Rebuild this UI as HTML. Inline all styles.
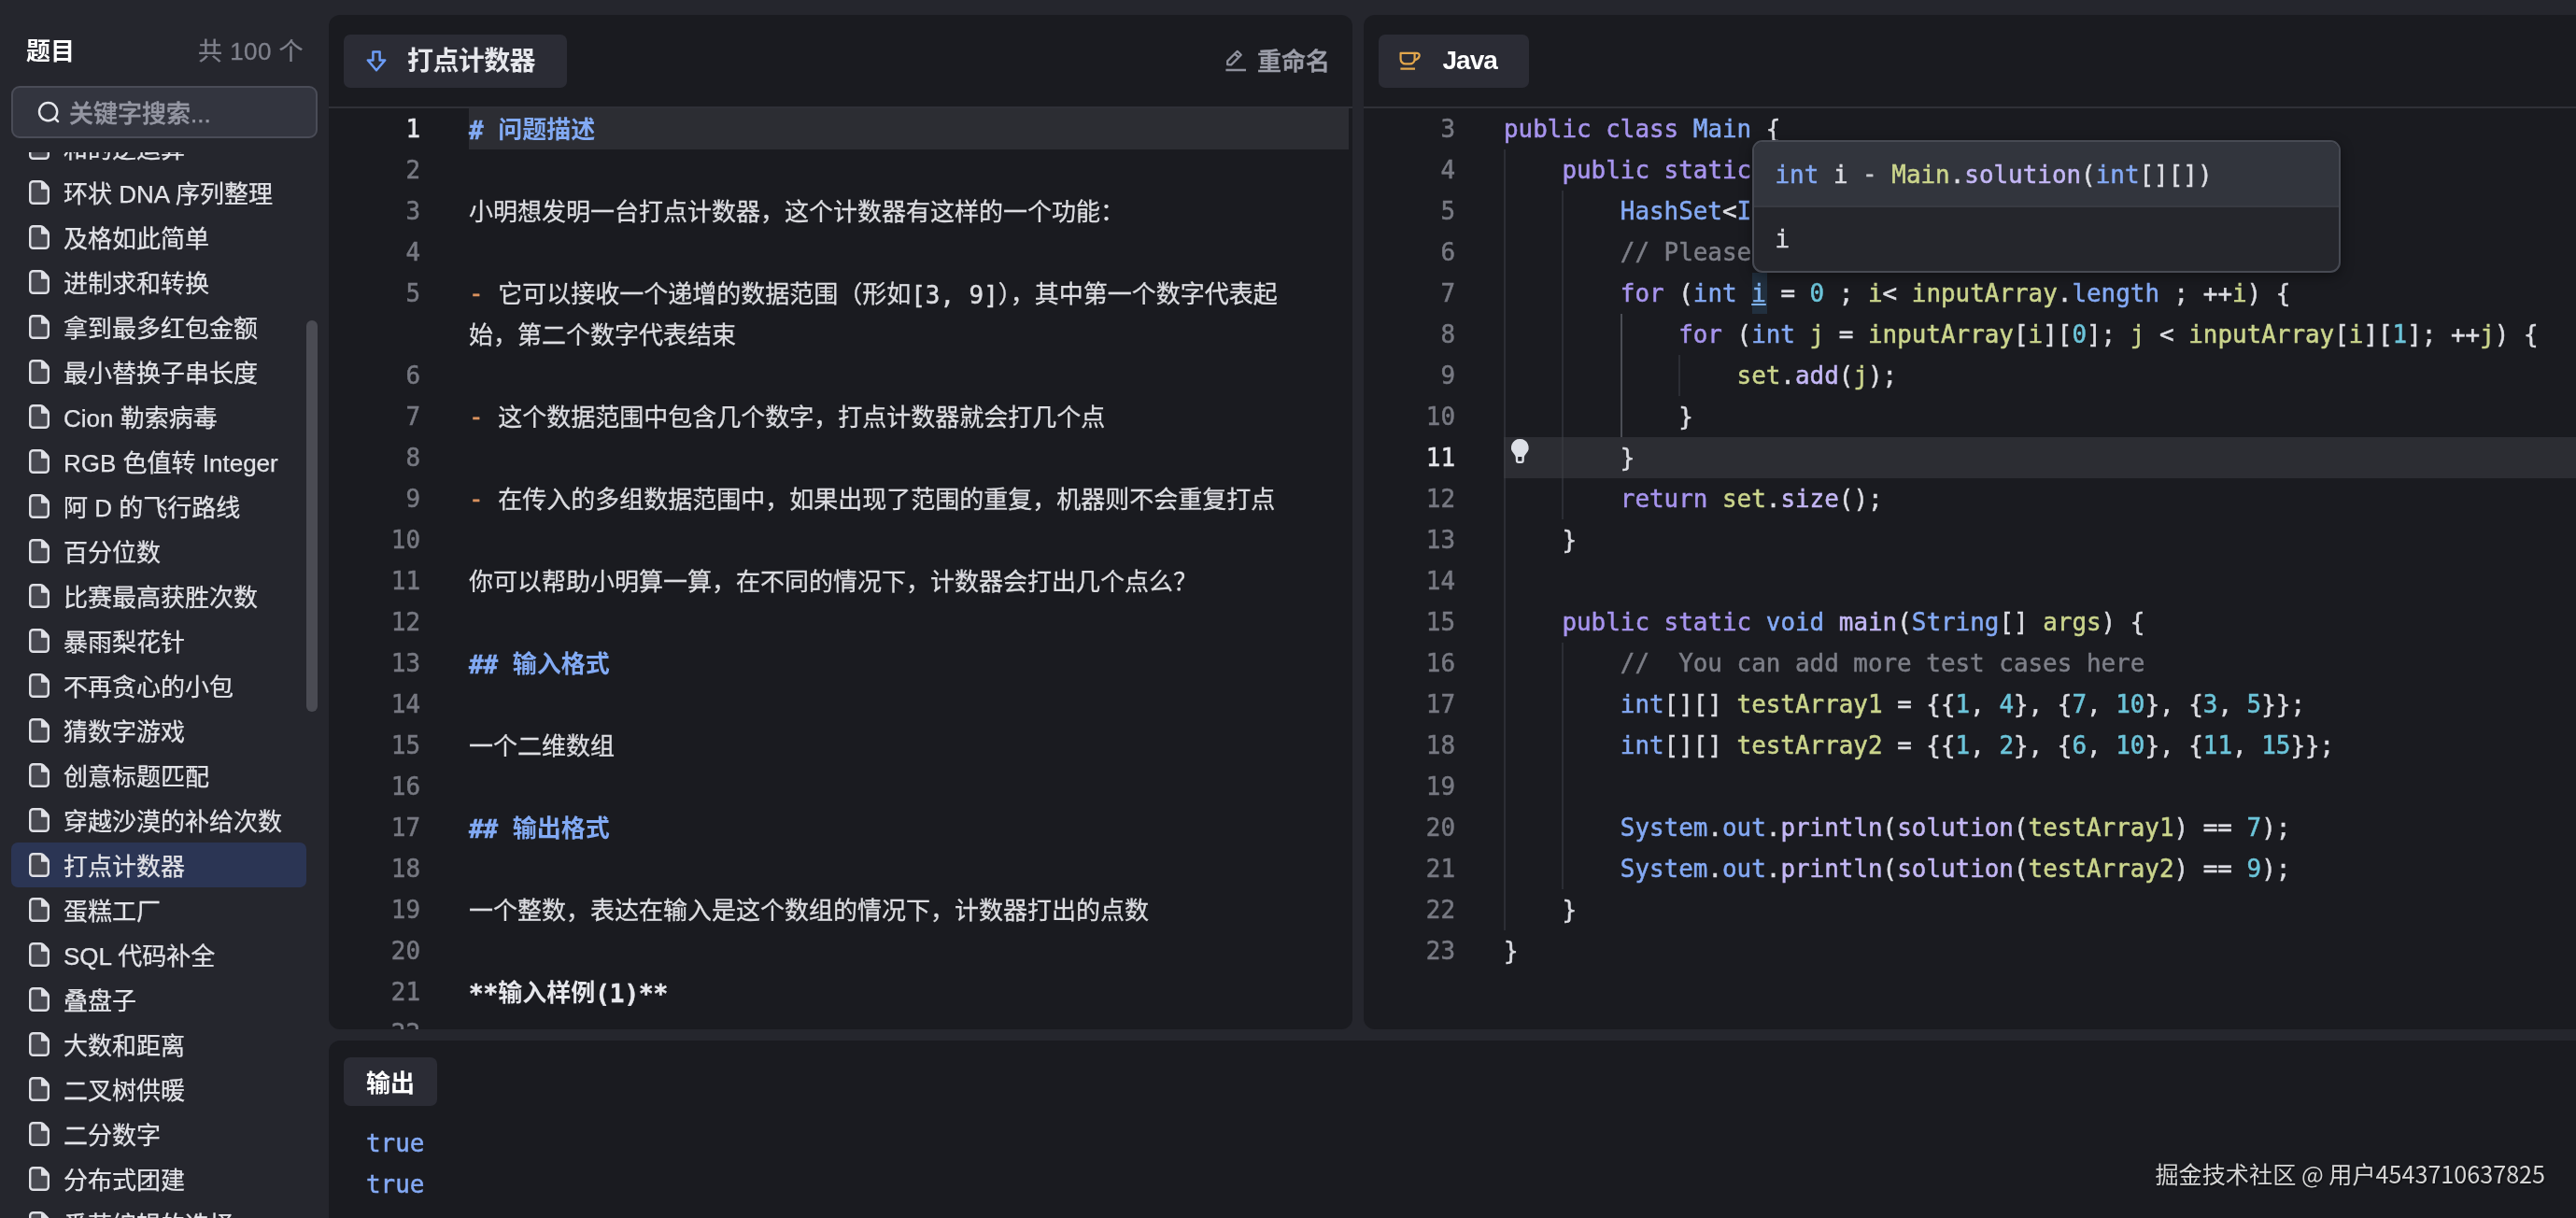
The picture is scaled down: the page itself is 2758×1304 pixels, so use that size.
<!DOCTYPE html><html lang="zh-CN"><head><meta charset="utf-8"><title>打点计数器</title><style>
*{margin:0;padding:0;box-sizing:border-box}
html,body{width:2758px;height:1304px;overflow:hidden;background:#25262d}
body{will-change:transform;position:relative;font-family:"Liberation Sans","Noto Sans CJK SC",sans-serif;color:#e2e3e8;font-size:26px}
.abs{position:absolute}
.panel{position:absolute;background:#1a1b20;overflow:hidden}
.tab{position:absolute;background:#2b2c35;border-radius:7px}
.sep{position:absolute;left:0;right:0;height:2px;background:#2f3037}
.mono{font-family:"DejaVu Sans Mono","Liberation Mono","Noto Sans CJK SC",monospace;font-size:25.913px;line-height:44px;white-space:pre;-webkit-text-stroke:0.5px}
.ln{position:absolute;width:90px;text-align:right;color:#777982;height:44px}
.ln.act{color:#e6e7ec}
.cl{position:absolute;height:44px;color:#dcdde3}
.k{color:#a794ee}.t{color:#84aaf5}.v{color:#cbd58c}.n{color:#6cc5da}.f{color:#c4b7f5}.p{color:#dcdde3}.c{color:#7d7f88}
.cj{font-family:"Noto Sans CJK SC",sans-serif;font-size:26px;position:relative;top:-1.5px;-webkit-text-stroke:0}
.md{color:#dcdde1}
.md.cj{-webkit-text-stroke:0.3px}
.hw{display:inline-block;width:13px;text-spacing-trim:space-all}
.h{color:#82aaf4;font-weight:bold}
.o{color:#d9925e;position:relative;top:-2.5px}
.dash{color:#c8c9ce;position:relative;top:-1px}
.b{color:#e6e7ec;font-weight:bold}
.guide{position:absolute;width:2px;background:#2c2e35}
.item{position:absolute;left:12px;width:316px;height:48px;border-radius:7px}
.item svg{position:absolute;left:19px;top:11px}
.item span{position:absolute;left:56px;top:2px;line-height:48px;white-space:nowrap;color:#e2e3e8;font-size:26px;-webkit-text-stroke:0.25px}
.item.sel{background:#2b3554}
</style></head><body>
<div class="abs" style="left:28px;top:35px;line-height:40px;font-weight:bold;color:#fff;font-size:26px">题目</div>
<div class="abs" style="right:2433px;top:35px;line-height:40px;color:#7f818c;font-size:26px;white-space:pre;letter-spacing:0.45px;-webkit-text-stroke:0.3px">共 100 个</div>
<div class="abs" style="left:12px;top:92px;width:328px;height:56px;border:2px solid #4a4c57;border-radius:9px;background:#33353f"></div>
<svg class="abs" style="left:39px;top:107px" width="28" height="28" viewBox="0 0 28 28"><circle cx="12.6" cy="12.6" r="9.6" fill="none" stroke="#e6e7ec" stroke-width="2.4"/><path d="M19.6 19.6 L23 23" stroke="#e6e7ec" stroke-width="2.5" stroke-linecap="round"/></svg>
<div class="abs" style="left:74px;top:101.5px;line-height:40px;color:#9496a2;font-size:26px;font-weight:500;-webkit-text-stroke:0.4px">关键字搜索...</div>
<div class="abs" style="left:0;top:163px;width:345px;height:1141px;overflow:hidden">
<div class="item" style="top:-29px"><svg width="24" height="26" viewBox="0 0 24 26"><path d="M1.2 4.6A3.4 3.4 0 0 1 4.6 1.2H12.4Q14.2 1.2 15.4 2.4L19.6 6.6Q20.8 7.8 20.8 9.6V21.4A3.4 3.4 0 0 1 17.4 24.8H4.6A3.4 3.4 0 0 1 1.2 21.4Z" fill="#484951" stroke="#dfe0e6" stroke-width="2.4"/><path d="M13 1.2V9.8H20.8Q20.8 7.8 19.6 6.6L15.4 2.4Q14.2 1.2 13 1.2Z" fill="#dfe0e6"/></svg><span>和的逆运算</span></div>
<div class="item" style="top:19px"><svg width="24" height="26" viewBox="0 0 24 26"><path d="M1.2 4.6A3.4 3.4 0 0 1 4.6 1.2H12.4Q14.2 1.2 15.4 2.4L19.6 6.6Q20.8 7.8 20.8 9.6V21.4A3.4 3.4 0 0 1 17.4 24.8H4.6A3.4 3.4 0 0 1 1.2 21.4Z" fill="#484951" stroke="#dfe0e6" stroke-width="2.4"/><path d="M13 1.2V9.8H20.8Q20.8 7.8 19.6 6.6L15.4 2.4Q14.2 1.2 13 1.2Z" fill="#dfe0e6"/></svg><span>环状 DNA 序列整理</span></div>
<div class="item" style="top:67px"><svg width="24" height="26" viewBox="0 0 24 26"><path d="M1.2 4.6A3.4 3.4 0 0 1 4.6 1.2H12.4Q14.2 1.2 15.4 2.4L19.6 6.6Q20.8 7.8 20.8 9.6V21.4A3.4 3.4 0 0 1 17.4 24.8H4.6A3.4 3.4 0 0 1 1.2 21.4Z" fill="#484951" stroke="#dfe0e6" stroke-width="2.4"/><path d="M13 1.2V9.8H20.8Q20.8 7.8 19.6 6.6L15.4 2.4Q14.2 1.2 13 1.2Z" fill="#dfe0e6"/></svg><span>及格如此简单</span></div>
<div class="item" style="top:115px"><svg width="24" height="26" viewBox="0 0 24 26"><path d="M1.2 4.6A3.4 3.4 0 0 1 4.6 1.2H12.4Q14.2 1.2 15.4 2.4L19.6 6.6Q20.8 7.8 20.8 9.6V21.4A3.4 3.4 0 0 1 17.4 24.8H4.6A3.4 3.4 0 0 1 1.2 21.4Z" fill="#484951" stroke="#dfe0e6" stroke-width="2.4"/><path d="M13 1.2V9.8H20.8Q20.8 7.8 19.6 6.6L15.4 2.4Q14.2 1.2 13 1.2Z" fill="#dfe0e6"/></svg><span>进制求和转换</span></div>
<div class="item" style="top:163px"><svg width="24" height="26" viewBox="0 0 24 26"><path d="M1.2 4.6A3.4 3.4 0 0 1 4.6 1.2H12.4Q14.2 1.2 15.4 2.4L19.6 6.6Q20.8 7.8 20.8 9.6V21.4A3.4 3.4 0 0 1 17.4 24.8H4.6A3.4 3.4 0 0 1 1.2 21.4Z" fill="#484951" stroke="#dfe0e6" stroke-width="2.4"/><path d="M13 1.2V9.8H20.8Q20.8 7.8 19.6 6.6L15.4 2.4Q14.2 1.2 13 1.2Z" fill="#dfe0e6"/></svg><span>拿到最多红包金额</span></div>
<div class="item" style="top:211px"><svg width="24" height="26" viewBox="0 0 24 26"><path d="M1.2 4.6A3.4 3.4 0 0 1 4.6 1.2H12.4Q14.2 1.2 15.4 2.4L19.6 6.6Q20.8 7.8 20.8 9.6V21.4A3.4 3.4 0 0 1 17.4 24.8H4.6A3.4 3.4 0 0 1 1.2 21.4Z" fill="#484951" stroke="#dfe0e6" stroke-width="2.4"/><path d="M13 1.2V9.8H20.8Q20.8 7.8 19.6 6.6L15.4 2.4Q14.2 1.2 13 1.2Z" fill="#dfe0e6"/></svg><span>最小替换子串长度</span></div>
<div class="item" style="top:259px"><svg width="24" height="26" viewBox="0 0 24 26"><path d="M1.2 4.6A3.4 3.4 0 0 1 4.6 1.2H12.4Q14.2 1.2 15.4 2.4L19.6 6.6Q20.8 7.8 20.8 9.6V21.4A3.4 3.4 0 0 1 17.4 24.8H4.6A3.4 3.4 0 0 1 1.2 21.4Z" fill="#484951" stroke="#dfe0e6" stroke-width="2.4"/><path d="M13 1.2V9.8H20.8Q20.8 7.8 19.6 6.6L15.4 2.4Q14.2 1.2 13 1.2Z" fill="#dfe0e6"/></svg><span>Cion 勒索病毒</span></div>
<div class="item" style="top:307px"><svg width="24" height="26" viewBox="0 0 24 26"><path d="M1.2 4.6A3.4 3.4 0 0 1 4.6 1.2H12.4Q14.2 1.2 15.4 2.4L19.6 6.6Q20.8 7.8 20.8 9.6V21.4A3.4 3.4 0 0 1 17.4 24.8H4.6A3.4 3.4 0 0 1 1.2 21.4Z" fill="#484951" stroke="#dfe0e6" stroke-width="2.4"/><path d="M13 1.2V9.8H20.8Q20.8 7.8 19.6 6.6L15.4 2.4Q14.2 1.2 13 1.2Z" fill="#dfe0e6"/></svg><span>RGB 色值转 Integer</span></div>
<div class="item" style="top:355px"><svg width="24" height="26" viewBox="0 0 24 26"><path d="M1.2 4.6A3.4 3.4 0 0 1 4.6 1.2H12.4Q14.2 1.2 15.4 2.4L19.6 6.6Q20.8 7.8 20.8 9.6V21.4A3.4 3.4 0 0 1 17.4 24.8H4.6A3.4 3.4 0 0 1 1.2 21.4Z" fill="#484951" stroke="#dfe0e6" stroke-width="2.4"/><path d="M13 1.2V9.8H20.8Q20.8 7.8 19.6 6.6L15.4 2.4Q14.2 1.2 13 1.2Z" fill="#dfe0e6"/></svg><span>阿 D 的飞行路线</span></div>
<div class="item" style="top:403px"><svg width="24" height="26" viewBox="0 0 24 26"><path d="M1.2 4.6A3.4 3.4 0 0 1 4.6 1.2H12.4Q14.2 1.2 15.4 2.4L19.6 6.6Q20.8 7.8 20.8 9.6V21.4A3.4 3.4 0 0 1 17.4 24.8H4.6A3.4 3.4 0 0 1 1.2 21.4Z" fill="#484951" stroke="#dfe0e6" stroke-width="2.4"/><path d="M13 1.2V9.8H20.8Q20.8 7.8 19.6 6.6L15.4 2.4Q14.2 1.2 13 1.2Z" fill="#dfe0e6"/></svg><span>百分位数</span></div>
<div class="item" style="top:451px"><svg width="24" height="26" viewBox="0 0 24 26"><path d="M1.2 4.6A3.4 3.4 0 0 1 4.6 1.2H12.4Q14.2 1.2 15.4 2.4L19.6 6.6Q20.8 7.8 20.8 9.6V21.4A3.4 3.4 0 0 1 17.4 24.8H4.6A3.4 3.4 0 0 1 1.2 21.4Z" fill="#484951" stroke="#dfe0e6" stroke-width="2.4"/><path d="M13 1.2V9.8H20.8Q20.8 7.8 19.6 6.6L15.4 2.4Q14.2 1.2 13 1.2Z" fill="#dfe0e6"/></svg><span>比赛最高获胜次数</span></div>
<div class="item" style="top:499px"><svg width="24" height="26" viewBox="0 0 24 26"><path d="M1.2 4.6A3.4 3.4 0 0 1 4.6 1.2H12.4Q14.2 1.2 15.4 2.4L19.6 6.6Q20.8 7.8 20.8 9.6V21.4A3.4 3.4 0 0 1 17.4 24.8H4.6A3.4 3.4 0 0 1 1.2 21.4Z" fill="#484951" stroke="#dfe0e6" stroke-width="2.4"/><path d="M13 1.2V9.8H20.8Q20.8 7.8 19.6 6.6L15.4 2.4Q14.2 1.2 13 1.2Z" fill="#dfe0e6"/></svg><span>暴雨梨花针</span></div>
<div class="item" style="top:547px"><svg width="24" height="26" viewBox="0 0 24 26"><path d="M1.2 4.6A3.4 3.4 0 0 1 4.6 1.2H12.4Q14.2 1.2 15.4 2.4L19.6 6.6Q20.8 7.8 20.8 9.6V21.4A3.4 3.4 0 0 1 17.4 24.8H4.6A3.4 3.4 0 0 1 1.2 21.4Z" fill="#484951" stroke="#dfe0e6" stroke-width="2.4"/><path d="M13 1.2V9.8H20.8Q20.8 7.8 19.6 6.6L15.4 2.4Q14.2 1.2 13 1.2Z" fill="#dfe0e6"/></svg><span>不再贪心的小包</span></div>
<div class="item" style="top:595px"><svg width="24" height="26" viewBox="0 0 24 26"><path d="M1.2 4.6A3.4 3.4 0 0 1 4.6 1.2H12.4Q14.2 1.2 15.4 2.4L19.6 6.6Q20.8 7.8 20.8 9.6V21.4A3.4 3.4 0 0 1 17.4 24.8H4.6A3.4 3.4 0 0 1 1.2 21.4Z" fill="#484951" stroke="#dfe0e6" stroke-width="2.4"/><path d="M13 1.2V9.8H20.8Q20.8 7.8 19.6 6.6L15.4 2.4Q14.2 1.2 13 1.2Z" fill="#dfe0e6"/></svg><span>猜数字游戏</span></div>
<div class="item" style="top:643px"><svg width="24" height="26" viewBox="0 0 24 26"><path d="M1.2 4.6A3.4 3.4 0 0 1 4.6 1.2H12.4Q14.2 1.2 15.4 2.4L19.6 6.6Q20.8 7.8 20.8 9.6V21.4A3.4 3.4 0 0 1 17.4 24.8H4.6A3.4 3.4 0 0 1 1.2 21.4Z" fill="#484951" stroke="#dfe0e6" stroke-width="2.4"/><path d="M13 1.2V9.8H20.8Q20.8 7.8 19.6 6.6L15.4 2.4Q14.2 1.2 13 1.2Z" fill="#dfe0e6"/></svg><span>创意标题匹配</span></div>
<div class="item" style="top:691px"><svg width="24" height="26" viewBox="0 0 24 26"><path d="M1.2 4.6A3.4 3.4 0 0 1 4.6 1.2H12.4Q14.2 1.2 15.4 2.4L19.6 6.6Q20.8 7.8 20.8 9.6V21.4A3.4 3.4 0 0 1 17.4 24.8H4.6A3.4 3.4 0 0 1 1.2 21.4Z" fill="#484951" stroke="#dfe0e6" stroke-width="2.4"/><path d="M13 1.2V9.8H20.8Q20.8 7.8 19.6 6.6L15.4 2.4Q14.2 1.2 13 1.2Z" fill="#dfe0e6"/></svg><span>穿越沙漠的补给次数</span></div>
<div class="item sel" style="top:739px"><svg width="24" height="26" viewBox="0 0 24 26"><path d="M1.2 4.6A3.4 3.4 0 0 1 4.6 1.2H12.4Q14.2 1.2 15.4 2.4L19.6 6.6Q20.8 7.8 20.8 9.6V21.4A3.4 3.4 0 0 1 17.4 24.8H4.6A3.4 3.4 0 0 1 1.2 21.4Z" fill="#484951" stroke="#dfe0e6" stroke-width="2.4"/><path d="M13 1.2V9.8H20.8Q20.8 7.8 19.6 6.6L15.4 2.4Q14.2 1.2 13 1.2Z" fill="#dfe0e6"/></svg><span>打点计数器</span></div>
<div class="item" style="top:787px"><svg width="24" height="26" viewBox="0 0 24 26"><path d="M1.2 4.6A3.4 3.4 0 0 1 4.6 1.2H12.4Q14.2 1.2 15.4 2.4L19.6 6.6Q20.8 7.8 20.8 9.6V21.4A3.4 3.4 0 0 1 17.4 24.8H4.6A3.4 3.4 0 0 1 1.2 21.4Z" fill="#484951" stroke="#dfe0e6" stroke-width="2.4"/><path d="M13 1.2V9.8H20.8Q20.8 7.8 19.6 6.6L15.4 2.4Q14.2 1.2 13 1.2Z" fill="#dfe0e6"/></svg><span>蛋糕工厂</span></div>
<div class="item" style="top:835px"><svg width="24" height="26" viewBox="0 0 24 26"><path d="M1.2 4.6A3.4 3.4 0 0 1 4.6 1.2H12.4Q14.2 1.2 15.4 2.4L19.6 6.6Q20.8 7.8 20.8 9.6V21.4A3.4 3.4 0 0 1 17.4 24.8H4.6A3.4 3.4 0 0 1 1.2 21.4Z" fill="#484951" stroke="#dfe0e6" stroke-width="2.4"/><path d="M13 1.2V9.8H20.8Q20.8 7.8 19.6 6.6L15.4 2.4Q14.2 1.2 13 1.2Z" fill="#dfe0e6"/></svg><span>SQL 代码补全</span></div>
<div class="item" style="top:883px"><svg width="24" height="26" viewBox="0 0 24 26"><path d="M1.2 4.6A3.4 3.4 0 0 1 4.6 1.2H12.4Q14.2 1.2 15.4 2.4L19.6 6.6Q20.8 7.8 20.8 9.6V21.4A3.4 3.4 0 0 1 17.4 24.8H4.6A3.4 3.4 0 0 1 1.2 21.4Z" fill="#484951" stroke="#dfe0e6" stroke-width="2.4"/><path d="M13 1.2V9.8H20.8Q20.8 7.8 19.6 6.6L15.4 2.4Q14.2 1.2 13 1.2Z" fill="#dfe0e6"/></svg><span>叠盘子</span></div>
<div class="item" style="top:931px"><svg width="24" height="26" viewBox="0 0 24 26"><path d="M1.2 4.6A3.4 3.4 0 0 1 4.6 1.2H12.4Q14.2 1.2 15.4 2.4L19.6 6.6Q20.8 7.8 20.8 9.6V21.4A3.4 3.4 0 0 1 17.4 24.8H4.6A3.4 3.4 0 0 1 1.2 21.4Z" fill="#484951" stroke="#dfe0e6" stroke-width="2.4"/><path d="M13 1.2V9.8H20.8Q20.8 7.8 19.6 6.6L15.4 2.4Q14.2 1.2 13 1.2Z" fill="#dfe0e6"/></svg><span>大数和距离</span></div>
<div class="item" style="top:979px"><svg width="24" height="26" viewBox="0 0 24 26"><path d="M1.2 4.6A3.4 3.4 0 0 1 4.6 1.2H12.4Q14.2 1.2 15.4 2.4L19.6 6.6Q20.8 7.8 20.8 9.6V21.4A3.4 3.4 0 0 1 17.4 24.8H4.6A3.4 3.4 0 0 1 1.2 21.4Z" fill="#484951" stroke="#dfe0e6" stroke-width="2.4"/><path d="M13 1.2V9.8H20.8Q20.8 7.8 19.6 6.6L15.4 2.4Q14.2 1.2 13 1.2Z" fill="#dfe0e6"/></svg><span>二叉树供暖</span></div>
<div class="item" style="top:1027px"><svg width="24" height="26" viewBox="0 0 24 26"><path d="M1.2 4.6A3.4 3.4 0 0 1 4.6 1.2H12.4Q14.2 1.2 15.4 2.4L19.6 6.6Q20.8 7.8 20.8 9.6V21.4A3.4 3.4 0 0 1 17.4 24.8H4.6A3.4 3.4 0 0 1 1.2 21.4Z" fill="#484951" stroke="#dfe0e6" stroke-width="2.4"/><path d="M13 1.2V9.8H20.8Q20.8 7.8 19.6 6.6L15.4 2.4Q14.2 1.2 13 1.2Z" fill="#dfe0e6"/></svg><span>二分数字</span></div>
<div class="item" style="top:1075px"><svg width="24" height="26" viewBox="0 0 24 26"><path d="M1.2 4.6A3.4 3.4 0 0 1 4.6 1.2H12.4Q14.2 1.2 15.4 2.4L19.6 6.6Q20.8 7.8 20.8 9.6V21.4A3.4 3.4 0 0 1 17.4 24.8H4.6A3.4 3.4 0 0 1 1.2 21.4Z" fill="#484951" stroke="#dfe0e6" stroke-width="2.4"/><path d="M13 1.2V9.8H20.8Q20.8 7.8 19.6 6.6L15.4 2.4Q14.2 1.2 13 1.2Z" fill="#dfe0e6"/></svg><span>分布式团建</span></div>
<div class="item" style="top:1123px"><svg width="24" height="26" viewBox="0 0 24 26"><path d="M1.2 4.6A3.4 3.4 0 0 1 4.6 1.2H12.4Q14.2 1.2 15.4 2.4L19.6 6.6Q20.8 7.8 20.8 9.6V21.4A3.4 3.4 0 0 1 17.4 24.8H4.6A3.4 3.4 0 0 1 1.2 21.4Z" fill="#484951" stroke="#dfe0e6" stroke-width="2.4"/><path d="M13 1.2V9.8H20.8Q20.8 7.8 19.6 6.6L15.4 2.4Q14.2 1.2 13 1.2Z" fill="#dfe0e6"/></svg><span>番茄编辑的选择</span></div>
</div>
<div class="abs" style="left:328px;top:343px;width:12px;height:419px;border-radius:6px;background:#4a4b53"></div>
<div class="panel" style="left:352px;top:16px;width:1096px;height:1086px;border-radius:12px">
<div class="tab" style="left:16px;top:21px;width:239px;height:57px"></div>
<svg class="abs" style="left:38px;top:36px" width="26" height="26" viewBox="0 0 26 26"><path d="M9.4 3.4H16.6V12.4H22.2L13 23.2L3.8 12.4H9.4Z" fill="none" stroke="#6c9cf6" stroke-width="2.5" stroke-linejoin="round"/></svg>
<div class="abs" style="left:84px;top:28px;line-height:44px;font-weight:bold;color:#e6e7ec;font-size:28px;white-space:nowrap;letter-spacing:-0.6px">打点计数器</div>
<svg class="abs" style="left:958px;top:36px" width="26" height="26" viewBox="0 0 26 26"><path d="M4.2 17.2V13.4L14.8 2.8L18.8 6.8L8.2 17.4Z M12.2 5.6L16 9.4" fill="none" stroke="#8f919d" stroke-width="2.2" stroke-linejoin="round"/><path d="M2.4 23H24" stroke="#8f919d" stroke-width="2.4"/></svg>
<div class="abs" style="left:994px;top:28px;line-height:44px;font-weight:500;-webkit-text-stroke:0.5px;color:#9c9ea9;font-size:26px;white-space:nowrap">重命名</div>
<div class="sep" style="top:98px"></div>
<div class="abs" style="left:150px;top:100px;width:942px;height:44px;background:#2c2d33"></div>
<div class="ln mono act" style="left:8px;top:100px">1</div>
<div class="cl mono" style="left:150px;top:100px"><span class="h"># </span><span class="h cj">问题描述</span></div>
<div class="ln mono" style="left:8px;top:144px">2</div>
<div class="ln mono" style="left:8px;top:188px">3</div>
<div class="cl mono" style="left:150px;top:188px"><span class="md cj">小明想发明一台打点计数器，这个计数器有这样的一个功能：</span></div>
<div class="ln mono" style="left:8px;top:232px">4</div>
<div class="ln mono" style="left:8px;top:276px">5</div>
<div class="cl mono" style="left:150px;top:276px"><span class="o">- </span><span class="md cj">它可以接收一个递增的数据范围（形如</span><span class="md">[3, 9]</span><span class="md cj hw">）</span><span class="md cj">，其中第一个数字代表起</span></div>
<div class="cl mono" style="left:150px;top:320px"><span class="md cj">始，第二个数字代表结束</span></div>
<div class="ln mono" style="left:8px;top:364px">6</div>
<div class="ln mono" style="left:8px;top:408px">7</div>
<div class="cl mono" style="left:150px;top:408px"><span class="o">- </span><span class="md cj">这个数据范围中包含几个数字，打点计数器就会打几个点</span></div>
<div class="ln mono" style="left:8px;top:452px">8</div>
<div class="ln mono" style="left:8px;top:496px">9</div>
<div class="cl mono" style="left:150px;top:496px"><span class="o">- </span><span class="md cj">在传入的多组数据范围中，如果出现了范围的重复，机器则不会重复打点</span></div>
<div class="ln mono" style="left:8px;top:540px">10</div>
<div class="ln mono" style="left:8px;top:584px">11</div>
<div class="cl mono" style="left:150px;top:584px"><span class="md cj">你可以帮助小明算一算，在不同的情况下，计数器会打出几个点么？</span></div>
<div class="ln mono" style="left:8px;top:628px">12</div>
<div class="ln mono" style="left:8px;top:672px">13</div>
<div class="cl mono" style="left:150px;top:672px"><span class="h">## </span><span class="h cj">输入格式</span></div>
<div class="ln mono" style="left:8px;top:716px">14</div>
<div class="ln mono" style="left:8px;top:760px">15</div>
<div class="cl mono" style="left:150px;top:760px"><span class="md cj">一个二维数组</span></div>
<div class="ln mono" style="left:8px;top:804px">16</div>
<div class="ln mono" style="left:8px;top:848px">17</div>
<div class="cl mono" style="left:150px;top:848px"><span class="h">## </span><span class="h cj">输出格式</span></div>
<div class="ln mono" style="left:8px;top:892px">18</div>
<div class="ln mono" style="left:8px;top:936px">19</div>
<div class="cl mono" style="left:150px;top:936px"><span class="md cj">一个整数，表达在输入是这个数组的情况下，计数器打出的点数</span></div>
<div class="ln mono" style="left:8px;top:980px">20</div>
<div class="ln mono" style="left:8px;top:1024px">21</div>
<div class="cl mono" style="left:150px;top:1024px"><span class="b">**</span><span class="b cj">输入样例</span><span class="b">(1)**</span></div>
<div class="ln mono" style="left:8px;top:1068px">22</div>
</div>
<div class="panel" style="left:1460px;top:16px;width:1310px;height:1086px;border-radius:12px">
<div class="tab" style="left:16px;top:21px;width:161px;height:57px"></div>
<svg class="abs" style="left:37px;top:38px" width="28" height="24" viewBox="0 0 28 24"><path d="M2.6 2.8H17.6V9.2A5.2 5.2 0 0 1 12.4 14.4H7.8A5.2 5.2 0 0 1 2.6 9.2Z" fill="none" stroke="#e3a74c" stroke-width="2.2" stroke-linejoin="round"/><path d="M17.6 2.8H20.2A2.6 2.6 0 0 1 22.6 6.2C21.8 8.6 20 10 17.4 10.4" fill="none" stroke="#e3a74c" stroke-width="2.2" stroke-linejoin="round"/><path d="M2.4 19.6H18" stroke="#e3a74c" stroke-width="2.2"/></svg>
<div class="abs" style="left:84.5px;top:27px;line-height:44px;font-weight:bold;color:#fff;font-size:28px;letter-spacing:-1px">Java</div>
<div class="sep" style="top:98px"></div>
<div class="abs" style="left:150px;top:452px;width:1200px;height:44px;background:#2c2d33"></div>
<div class="abs" style="left:416.4px;top:276px;width:15.6px;height:44px;background:#22303f"></div>
<div class="guide" style="left:150.0px;top:144px;height:836px"></div>
<div class="guide" style="left:212.4px;top:188px;height:352px"></div>
<div class="guide" style="left:212.4px;top:672px;height:264px"></div>
<div class="guide" style="left:274.8px;top:320px;height:132px;background:#4b4d55"></div>
<div class="guide" style="left:337.2px;top:364px;height:44px"></div>
<div class="guide" style="left:150.0px;top:452px;height:44px;background:#35373d"></div>
<div class="guide" style="left:212.4px;top:452px;height:44px;background:#35373d"></div>
<div class="ln mono" style="left:8px;top:100px">3</div>
<div class="cl mono" style="left:150px;top:100px"><span class="k">public</span> <span class="k">class</span> <span class="t">Main</span> {</div>
<div class="ln mono" style="left:8px;top:144px">4</div>
<div class="cl mono" style="left:150px;top:144px">    <span class="k">public</span> <span class="k">static</span> <span class="t">int</span> <span class="f">solution</span>(<span class="t">int</span>[][] <span class="v">inputArray</span>) {</div>
<div class="ln mono" style="left:8px;top:188px">5</div>
<div class="cl mono" style="left:150px;top:188px">        <span class="t">HashSet</span>&lt;<span class="t">Integer</span>&gt; <span class="v">set</span> = <span class="k">new</span> <span class="t">HashSet</span>&lt;&gt;();</div>
<div class="ln mono" style="left:8px;top:232px">6</div>
<div class="cl mono" style="left:150px;top:232px">        <span class="c">// Please write your code here</span></div>
<div class="ln mono" style="left:8px;top:276px">7</div>
<div class="cl mono" style="left:150px;top:276px">        <span class="k">for</span> (<span class="t">int</span> <span class="lk" style="color:#7fb2f0;text-decoration:underline">i</span> = <span class="n">0</span> ; <span class="v">i</span>&lt; <span class="v">inputArray</span>.<span class="t">length</span> ; ++<span class="v">i</span>) {</div>
<div class="ln mono" style="left:8px;top:320px">8</div>
<div class="cl mono" style="left:150px;top:320px">            <span class="k">for</span> (<span class="t">int</span> <span class="v">j</span> = <span class="v">inputArray</span>[<span class="v">i</span>][<span class="n">0</span>]; <span class="v">j</span> &lt; <span class="v">inputArray</span>[<span class="v">i</span>][<span class="n">1</span>]; ++<span class="v">j</span>) {</div>
<div class="ln mono" style="left:8px;top:364px">9</div>
<div class="cl mono" style="left:150px;top:364px">                <span class="v">set</span>.<span class="f">add</span>(<span class="v">j</span>);</div>
<div class="ln mono" style="left:8px;top:408px">10</div>
<div class="cl mono" style="left:150px;top:408px">            }</div>
<div class="ln mono act" style="left:8px;top:452px">11</div>
<div class="cl mono" style="left:150px;top:452px">        }</div>
<div class="ln mono" style="left:8px;top:496px">12</div>
<div class="cl mono" style="left:150px;top:496px">        <span class="k">return</span> <span class="v">set</span>.<span class="f">size</span>();</div>
<div class="ln mono" style="left:8px;top:540px">13</div>
<div class="cl mono" style="left:150px;top:540px">    }</div>
<div class="ln mono" style="left:8px;top:584px">14</div>
<div class="ln mono" style="left:8px;top:628px">15</div>
<div class="cl mono" style="left:150px;top:628px">    <span class="k">public</span> <span class="k">static</span> <span class="t">void</span> <span class="f">main</span>(<span class="t">String</span>[] <span class="v">args</span>) {</div>
<div class="ln mono" style="left:8px;top:672px">16</div>
<div class="cl mono" style="left:150px;top:672px">        <span class="c">//  You can add more test cases here</span></div>
<div class="ln mono" style="left:8px;top:716px">17</div>
<div class="cl mono" style="left:150px;top:716px">        <span class="t">int</span>[][] <span class="v">testArray1</span> = {{<span class="n">1</span>, <span class="n">4</span>}, {<span class="n">7</span>, <span class="n">10</span>}, {<span class="n">3</span>, <span class="n">5</span>}};</div>
<div class="ln mono" style="left:8px;top:760px">18</div>
<div class="cl mono" style="left:150px;top:760px">        <span class="t">int</span>[][] <span class="v">testArray2</span> = {{<span class="n">1</span>, <span class="n">2</span>}, {<span class="n">6</span>, <span class="n">10</span>}, {<span class="n">11</span>, <span class="n">15</span>}};</div>
<div class="ln mono" style="left:8px;top:804px">19</div>
<div class="ln mono" style="left:8px;top:848px">20</div>
<div class="cl mono" style="left:150px;top:848px">        <span class="t">System</span>.<span class="t">out</span>.<span class="f">println</span>(<span class="f">solution</span>(<span class="v">testArray1</span>) == <span class="n">7</span>);</div>
<div class="ln mono" style="left:8px;top:892px">21</div>
<div class="cl mono" style="left:150px;top:892px">        <span class="t">System</span>.<span class="t">out</span>.<span class="f">println</span>(<span class="f">solution</span>(<span class="v">testArray2</span>) == <span class="n">9</span>);</div>
<div class="ln mono" style="left:8px;top:936px">22</div>
<div class="cl mono" style="left:150px;top:936px">    }</div>
<div class="ln mono" style="left:8px;top:980px">23</div>
<div class="cl mono" style="left:150px;top:980px">}</div>
<svg class="abs" style="left:156px;top:452px" width="24" height="30" viewBox="0 0 24 30"><path d="M11.2 2A9.2 9.2 0 0 0 4.6 17.6C6 19.2 6.8 20.6 6.8 22.4V25A3 3 0 0 0 9.8 28H12.8A3 3 0 0 0 15.8 25V22.4C15.8 20.6 16.6 19.2 18 17.6A9.2 9.2 0 0 0 11.2 2Z" fill="#dde0e7"/><rect x="9.2" y="21" width="4.2" height="4.6" fill="#22232a"/></svg>
<div class="abs" style="left:416px;top:134px;width:630px;height:142px;border:2px solid #474a53;border-radius:11px;background:#25262c;overflow:hidden;box-shadow:0 4px 14px rgba(0,0,0,.38)">
<div class="abs" style="left:0;top:0;width:100%;height:70px;background:#32353d;border-bottom:2px solid #383a42"></div>
<div class="cl mono" style="left:22.5px;top:12.5px"><span class="t">int</span> i <span class="dash">-</span> <span class="v">Main</span>.<span class="f">solution</span>(<span class="t">int</span>[][])</div>
<div class="cl mono" style="left:22.5px;top:82px">i</div>
</div>
</div>
<div class="panel" style="left:352px;top:1114px;width:2420px;height:210px;border-radius:12px">
<div class="tab" style="left:16px;top:18px;width:100px;height:52px"></div>
<div class="abs" style="left:40px;top:24px;line-height:44px;font-weight:bold;color:#fff;font-size:26px;white-space:nowrap">输出</div>
<div class="cl mono t" style="left:40px;top:88px">true</div>
<div class="cl mono t" style="left:40px;top:132px">true</div>
</div>
<div class="abs" style="right:33px;top:1235.5px;line-height:40px;font-family:'Noto Sans CJK SC',sans-serif;font-size:25.15px;color:#d6d6d6;white-space:nowrap;text-shadow:1px 1px 2px rgba(0,0,0,.6)">掘金技术社区 @ 用户4543710637825</div>
</body></html>
